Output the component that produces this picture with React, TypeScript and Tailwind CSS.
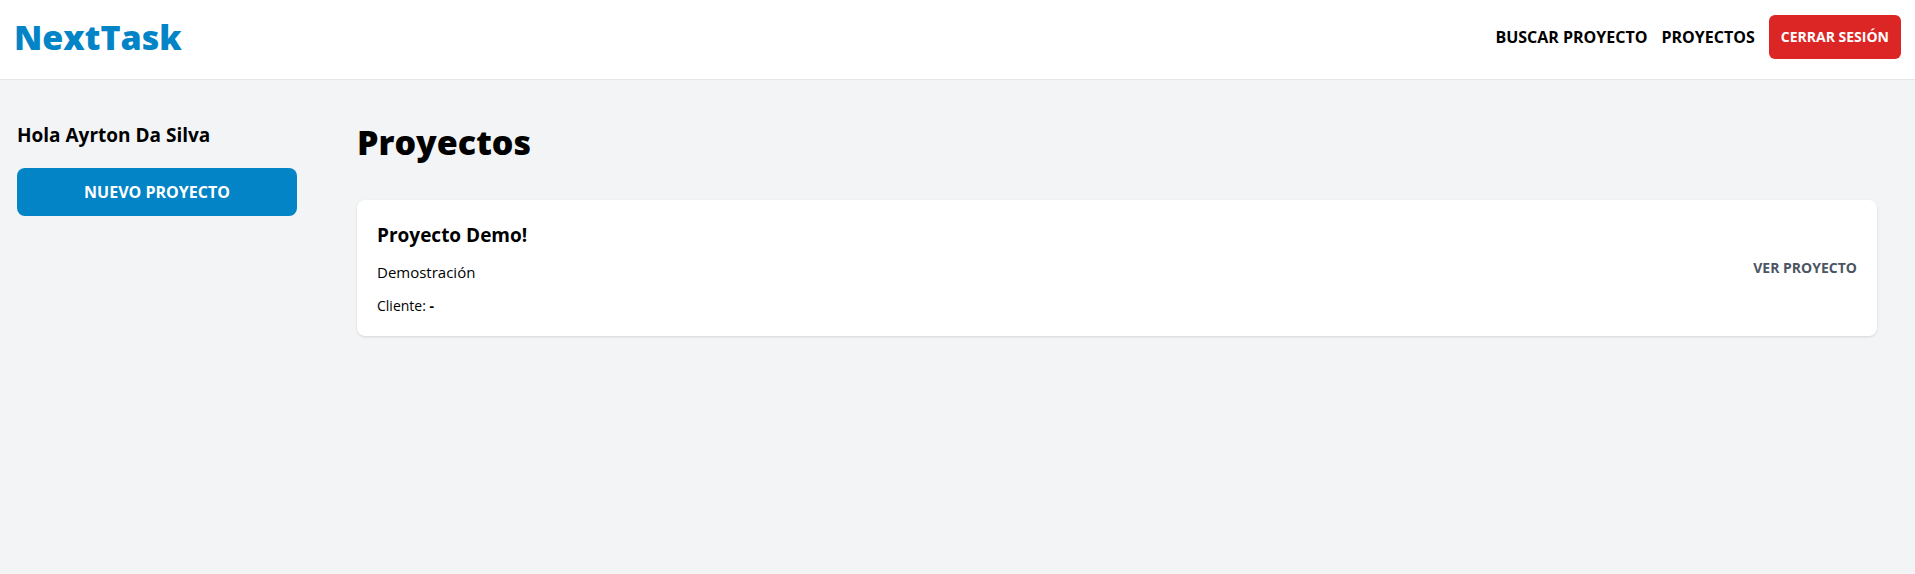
interface Project {
  id: number;
  name: string;
  description: string;
  client: string;
}

const projects: Project[] = [
  { id: 1, name: "Proyecto Demo!", description: "Demostración", client: "-" },
];

function Header() {
  return (
    <header className="flex items-start justify-between border-b border-[#e5e7eb] bg-white px-3.5 pt-[15px] pb-5">
      <a href="#inicio" className="text-[34px] leading-11 font-black text-[#0284c7]">
        NextTask
      </a>
      <nav className="flex items-center gap-3.5 uppercase">
        <a href="#buscar" className="font-bold">Buscar proyecto</a>
        <a href="#proyectos" className="font-bold">Proyectos</a>
        <button type="button" className="rounded-md bg-[#dc2626] p-3 text-sm font-bold text-white uppercase">
          Cerrar sesión
        </button>
      </nav>
    </header>
  );
}

function Sidebar() {
  return (
    <aside className="w-[314px] shrink-0 px-[17px] pt-10">
      <p className="text-[19px] leading-[30px] font-bold">Hola Ayrton Da Silva</p>
      <a
        href="#nuevo"
        className="mt-[18px] block rounded-lg bg-[#0284c7] p-3 text-center leading-6 font-bold text-white uppercase"
      >
        Nuevo proyecto
      </a>
    </aside>
  );
}

function ProjectCard({ project }: { project: Project }) {
  return (
    <li className="flex items-center justify-between rounded-lg bg-white p-5 shadow">
      <div>
        <h2 className="text-[19px] leading-[30px] font-bold">{project.name}</h2>
        <p className="mt-2.5 text-[15px] leading-6">{project.description}</p>
        <p className="mt-3 text-sm">
          Cliente: <span className="font-bold">{project.client}</span>
        </p>
      </div>
      <a href="#ver" className="text-sm font-bold text-[#4b5563] uppercase">
        Ver proyecto
      </a>
    </li>
  );
}

export default function App() {
  return (
    <div className="min-h-screen bg-[#f3f4f6] font-['Open_Sans','Noto_Sans',sans-serif] text-black">
      <Header />
      <div className="flex">
        <Sidebar />
        <main className="min-w-0 flex-1 py-10 pr-[38px] pl-[43px]">
          <h1 className="text-[34px] leading-11 font-black">Proyectos</h1>
          <ul className="mt-9 flex flex-col gap-5">
            {projects.map((project) => (
              <ProjectCard key={project.id} project={project} />
            ))}
          </ul>
        </main>
      </div>
    </div>
  );
}
